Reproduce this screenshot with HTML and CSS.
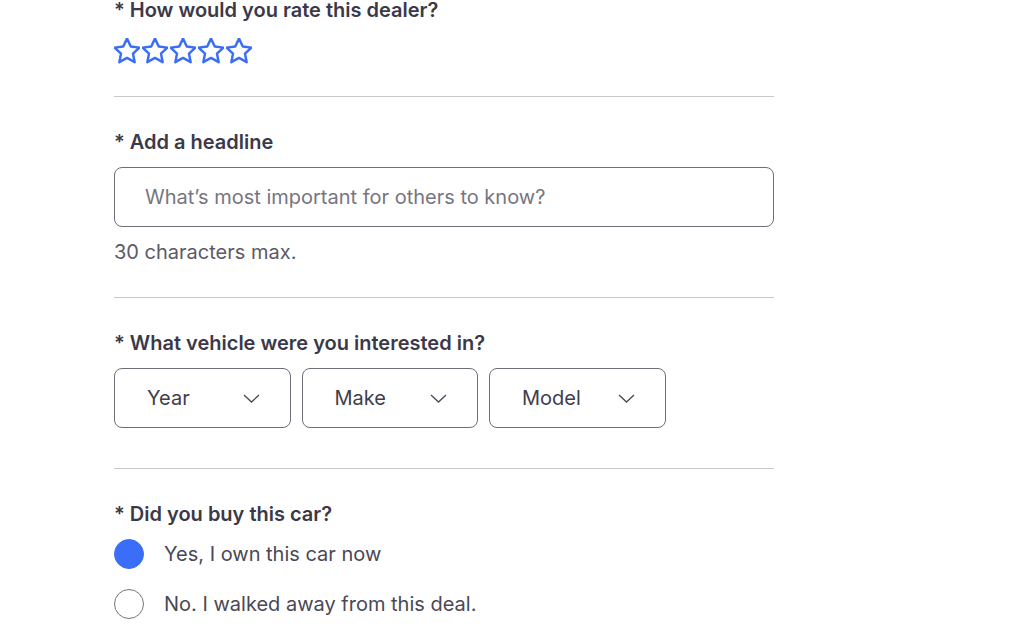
FILE: index.html
```html
<!DOCTYPE html>
<html lang="en">
<head>
    <meta charset="UTF-8">
    <title>Review this dealer</title>
    <link rel="stylesheet" href="styles.css">
</head>
<body>
    <form class="review">
        <div class="field field-rating">
            <label class="label">* How would you rate this dealer?</label>
            <div class="stars">
                <svg class="star" viewBox="2 2 20 20"><path d="M12 2.5l2.9 6.1 6.6.8-4.9 4.6 1.3 6.6L12 17.3l-5.9 3.3 1.3-6.6-4.9-4.6 6.6-.8z"/></svg>
                <svg class="star" viewBox="2 2 20 20"><path d="M12 2.5l2.9 6.1 6.6.8-4.9 4.6 1.3 6.6L12 17.3l-5.9 3.3 1.3-6.6-4.9-4.6 6.6-.8z"/></svg>
                <svg class="star" viewBox="2 2 20 20"><path d="M12 2.5l2.9 6.1 6.6.8-4.9 4.6 1.3 6.6L12 17.3l-5.9 3.3 1.3-6.6-4.9-4.6 6.6-.8z"/></svg>
                <svg class="star" viewBox="2 2 20 20"><path d="M12 2.5l2.9 6.1 6.6.8-4.9 4.6 1.3 6.6L12 17.3l-5.9 3.3 1.3-6.6-4.9-4.6 6.6-.8z"/></svg>
                <svg class="star" viewBox="2 2 20 20"><path d="M12 2.5l2.9 6.1 6.6.8-4.9 4.6 1.3 6.6L12 17.3l-5.9 3.3 1.3-6.6-4.9-4.6 6.6-.8z"/></svg>
            </div>
        </div>

        <div class="field field-headline">
            <label class="label" for="headline">* Add a headline</label>
            <input id="headline" class="text-input" type="text" placeholder="What’s most important for others to know?">
            <p class="hint">30 characters max.</p>
        </div>

        <div class="field field-vehicle">
            <label class="label">* What vehicle were you interested in?</label>
            <div class="selects">
                <div class="select"><span>Year</span><svg class="chevron" viewBox="0 0 17 9"><path d="M1 1l7.5 7 7.5-7"/></svg></div>
                <div class="select"><span>Make</span><svg class="chevron" viewBox="0 0 17 9"><path d="M1 1l7.5 7 7.5-7"/></svg></div>
                <div class="select"><span>Model</span><svg class="chevron" viewBox="0 0 17 9"><path d="M1 1l7.5 7 7.5-7"/></svg></div>
            </div>
        </div>

        <div class="field field-last">
            <label class="label">* Did you buy this car?</label>
            <div class="radios">
                <div class="radio"><span class="dot dot-on"></span>Yes, I own this car now</div>
                <div class="radio"><span class="dot"></span>No. I walked away from this deal.</div>
            </div>
        </div>
    </form>
</body>
</html>
```

FILE: styles.css
```css
* {
    margin: 0;
    padding: 0;
    box-sizing: border-box;
}

body {
    font-family: Inter, "Liberation Sans", sans-serif;
    color: #3f3d4c;
    background-color: #ffffff;
}

.review {
    width: 660px;
    margin-left: 114px;
}

.field {
    border-bottom: 1px solid #c9c9cc;
    padding-top: 35px;
}

.field-rating {
    padding-top: 0;
    padding-bottom: 32px;
}

.field-headline {
    padding-bottom: 33px;
}

.field-vehicle {
    padding-bottom: 40px;
}

.field-last {
    border-bottom: none;
}

.label {
    display: block;
    font-size: 20px;
    font-weight: 600;
    line-height: 20px;
    color: #3b3949;
}

.stars {
    display: flex;
    gap: 2px;
    margin-top: 18px;
}

.star {
    width: 26px;
    height: 26px;
    fill: none;
    stroke: #3b6ef6;
    stroke-width: 1.9;
    stroke-linejoin: round;
}

.text-input {
    display: block;
    width: 100%;
    height: 60px;
    margin-top: 15px;
    padding: 0 30px;
    border: 1px solid #6f6d78;
    border-radius: 8px;
    font-family: inherit;
    font-size: 20px;
    color: #3f3d4c;
}

.text-input::placeholder {
    color: #77757f;
}

.hint {
    margin-top: 13px;
    font-size: 20px;
    line-height: 24px;
    color: #5c5a66;
}

.selects {
    display: flex;
    gap: 11px;
    margin-top: 15px;
}

.select {
    display: flex;
    align-items: center;
    justify-content: space-between;
    width: 176.5px;
    height: 60px;
    padding: 0 30px 0 32px;
    border: 1px solid #6f6d78;
    border-radius: 8px;
    font-size: 20px;
    color: #3f3d4c;
}

.chevron {
    width: 17px;
    height: 9px;
    fill: none;
    stroke: #4a4856;
    stroke-width: 1.3;
}

.radios {
    display: flex;
    flex-direction: column;
    gap: 20px;
    margin-top: 15px;
}

.radio {
    display: flex;
    align-items: center;
    gap: 20px;
    height: 30px;
    font-size: 20px;
    color: #4a4856;
}

.dot {
    width: 30px;
    height: 30px;
    border-radius: 50%;
    border: 1.5px solid #76747e;
}

.dot-on {
    background-color: #3b6ef8;
    border-color: #3b6ef8;
}
```
